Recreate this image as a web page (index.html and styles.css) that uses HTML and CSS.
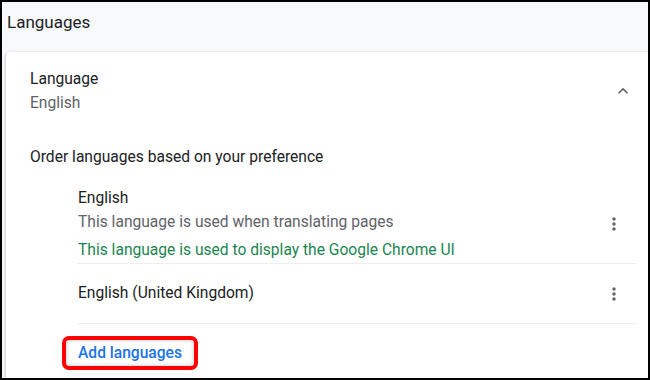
FILE: index.html
```html
<!doctype html>
<html lang="en">
<head>
<meta charset="utf-8">
<title>Languages</title>
<link rel="stylesheet" href="styles.css">
</head>
<body>

<div class="frame">
  <h2 class="pageTitle">Languages</h2>

  <div class="card">
    <div class="summary">
      <div>
        <div class="label">Language</div>
        <div class="secondary">English</div>
      </div>
      <svg class="chevron" viewBox="0 0 24 24" width="20" height="20">
        <path d="M12 8l-6 6 1.41 1.41L12 10.83l4.59 4.58L18 14z"></path>
      </svg>
    </div>

    <div class="orderHint">Order languages based on your preference</div>

    <div class="langList">
      <div class="langRow first">
        <div>
          <div class="label">English</div>
          <div class="secondary">This language is used when translating pages</div>
          <div class="uiNote">This language is used to display the Google Chrome UI</div>
        </div>
        <svg class="more" viewBox="0 0 24 24" width="20" height="20">
          <path d="M12 8c1.1 0 2-.9 2-2s-.9-2-2-2-2 .9-2 2 .9 2 2 2zm0 2c-1.1 0-2 .9-2 2s.9 2 2 2 2-.9 2-2-.9-2-2-2zm0 6c-1.1 0-2 .9-2 2s.9 2 2 2 2-.9 2-2-.9-2-2-2z"></path>
        </svg>
      </div>
      <div class="langRow">
        <div class="label">English (United Kingdom)</div>
        <svg class="more" viewBox="0 0 24 24" width="20" height="20">
          <path d="M12 8c1.1 0 2-.9 2-2s-.9-2-2-2-2 .9-2 2 .9 2 2 2zm0 2c-1.1 0-2 .9-2 2s.9 2 2 2 2-.9 2-2-.9-2-2-2zm0 6c-1.1 0-2 .9-2 2s.9 2 2 2 2-.9 2-2-.9-2-2-2z"></path>
        </svg>
      </div>
    </div>

    <div class="addRow">
      <a class="addLink" href="#">Add languages</a>
    </div>
  </div>
</div>

</body>
</html>
```

FILE: styles.css
```css
body {
  margin: 0;
  font-family: Roboto, "Liberation Sans", sans-serif;
  font-size: 15.6px;
  color: #202124;
}
.frame {
  width: 650px;
  height: 380px;
  box-sizing: border-box;
  border: 2px solid #000;
  background: #f8f9fa;
  overflow: hidden;
}
.pageTitle {
  margin: 0;
  padding: 8px 0 0 5px;
  height: 39px;
  box-sizing: border-box;
  font-size: 17px;
  font-weight: 400;
  line-height: 24px;
  color: #202124;
}
.card {
  margin: 11px -14px 0 4px;
  padding: 15px 25px 0 24px;
  background: #fff;
  border-radius: 4px;
  box-shadow: 0 1px 2px rgba(60, 64, 67, 0.3), 0 1px 3px 1px rgba(60, 64, 67, 0.15);
  height: 340px;
}
.label,
.secondary,
.uiNote,
.orderHint {
  line-height: 24px;
}
.secondary {
  color: #5f6368;
}
.uiNote {
  color: #1b8550;
  margin-top: 4px;
}
.summary {
  display: flex;
  justify-content: space-between;
  align-items: center;
}
.chevron {
  fill: #5f6368;
  margin-right: 4px;
}
.orderHint {
  margin-top: 30px;
}
.langList {
  margin-left: 48px;
  margin-top: 17px;
}
.langRow {
  display: flex;
  justify-content: space-between;
  align-items: center;
  border-bottom: 1px solid #eceef0;
  height: 59px;
}
.langRow.first {
  height: auto;
  padding-bottom: 1px;
}
.langRow .label {
  margin-top: -1px;
}
.langRow.first .label {
  margin-top: 0;
}
.more {
  fill: #5f6368;
  margin-right: 13px;
}
.addRow {
  margin-left: 32px;
  padding-top: 12px;
}
.addLink {
  display: inline-block;
  padding: 0 12px;
  border: 4px solid #f00;
  border-radius: 7px;
  box-shadow: inset 0 0 4px rgba(0, 0, 0, 0.25);
  color: #1a73e8;
  font-weight: 500;
  line-height: 26px;
  text-decoration: none;
}
```
